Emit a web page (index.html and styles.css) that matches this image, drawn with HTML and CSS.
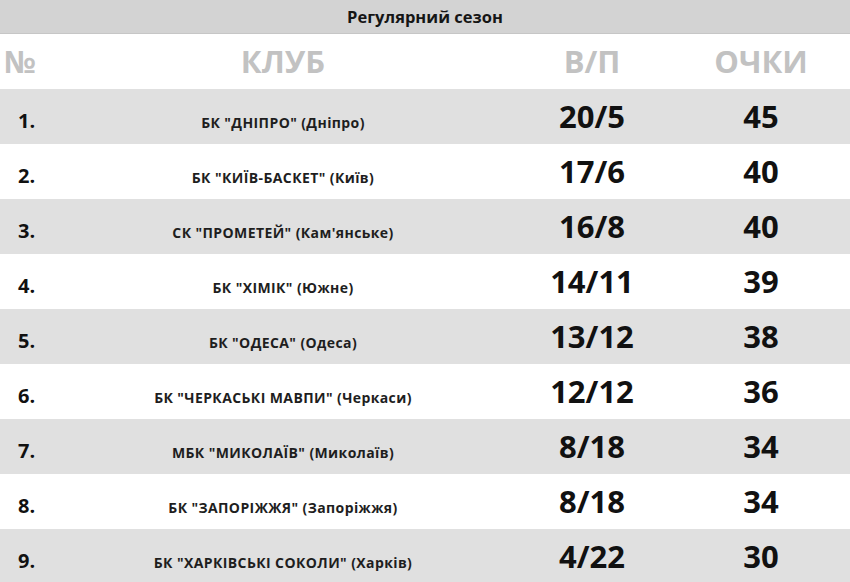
FILE: index.html
```html
<!DOCTYPE html>
<html lang="uk">
<head>
<meta charset="utf-8">
<title>Регулярний сезон</title>
<link rel="stylesheet" href="styles.css">
</head>
<body>
<div class="standings">
  <div class="title">Регулярний сезон</div>
  <div class="row head">
    <div class="c-pos">№</div>
    <div class="c-club">КЛУБ</div>
    <div class="c-wl">В/П</div>
    <div class="c-pts">ОЧКИ</div>
  </div>
  <div class="row alt">
    <div class="c-pos">1.</div>
    <div class="c-club">БК "ДНІПРО" (Дніпро)</div>
    <div class="c-wl">20/5</div>
    <div class="c-pts">45</div>
  </div>
  <div class="row">
    <div class="c-pos">2.</div>
    <div class="c-club">БК "КИЇВ-БАСКЕТ" (Київ)</div>
    <div class="c-wl">17/6</div>
    <div class="c-pts">40</div>
  </div>
  <div class="row alt">
    <div class="c-pos">3.</div>
    <div class="c-club">СК "ПРОМЕТЕЙ" (Кам'янське)</div>
    <div class="c-wl">16/8</div>
    <div class="c-pts">40</div>
  </div>
  <div class="row">
    <div class="c-pos">4.</div>
    <div class="c-club">БК "ХІМІК" (Южне)</div>
    <div class="c-wl">14/11</div>
    <div class="c-pts">39</div>
  </div>
  <div class="row alt">
    <div class="c-pos">5.</div>
    <div class="c-club">БК "ОДЕСА" (Одеса)</div>
    <div class="c-wl">13/12</div>
    <div class="c-pts">38</div>
  </div>
  <div class="row">
    <div class="c-pos">6.</div>
    <div class="c-club">БК "ЧЕРКАСЬКІ МАВПИ" (Черкаси)</div>
    <div class="c-wl">12/12</div>
    <div class="c-pts">36</div>
  </div>
  <div class="row alt">
    <div class="c-pos">7.</div>
    <div class="c-club">МБК "МИКОЛАЇВ" (Миколаїв)</div>
    <div class="c-wl">8/18</div>
    <div class="c-pts">34</div>
  </div>
  <div class="row">
    <div class="c-pos">8.</div>
    <div class="c-club">БК "ЗАПОРІЖЖЯ" (Запоріжжя)</div>
    <div class="c-wl">8/18</div>
    <div class="c-pts">34</div>
  </div>
  <div class="row alt">
    <div class="c-pos">9.</div>
    <div class="c-club">БК "ХАРКІВСЬКІ СОКОЛИ" (Харків)</div>
    <div class="c-wl">4/22</div>
    <div class="c-pts">30</div>
  </div>
</div>
</body>
</html>
```

FILE: styles.css
```css
html, body {
  margin: 0;
  padding: 0;
  background: #ffffff;
  overflow: hidden;
}

.standings {
  width: 850px;
  font-family: "Open Sans", "Liberation Sans", sans-serif;
  font-weight: 700;
  color: #111111;
}

.title {
  height: 34px;
  background: #d3d3d3;
  border-bottom: 1px solid #c6c6c6;
  box-sizing: border-box;
  font-size: 16.5px;
  line-height: 33px;
  text-align: center;
  color: #151515;
}

.row {
  display: grid;
  grid-template-columns: 54px 458px 160px 178px;
  align-items: baseline;
  height: 55px;
  box-sizing: border-box;
  padding-top: 12px;
  background: #ffffff;
}

.row.alt {
  background: #e0e0e0;
}

.row > div {
  line-height: 1;
  text-align: center;
}

.c-pos {
  font-size: 20px;
  text-align: left !important;
  padding-left: 18px;
}

.c-club {
  font-size: 14px;
  letter-spacing: 0.4px;
  color: #1e1e1e;
}

.c-wl,
.c-pts {
  font-size: 31px;
}

.row.head {
  padding-top: 12px;
  color: #c2c2c2;
}

.row.head > div {
  font-size: 31px;
  letter-spacing: 0;
  color: #c2c2c2;
}

.row.head .c-pos {
  padding-left: 4px;
}
```
